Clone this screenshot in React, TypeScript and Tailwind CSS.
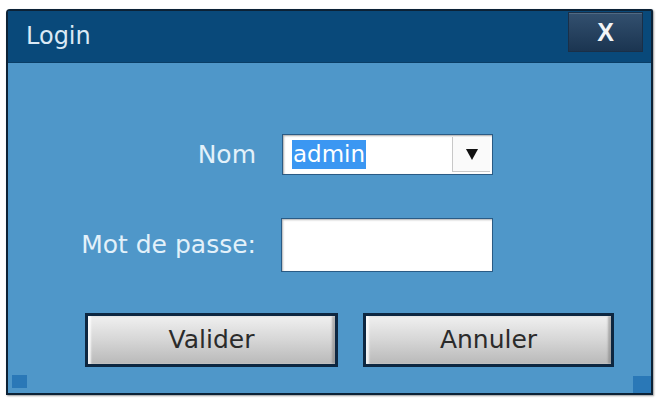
import React from "react";

export default function App() {
  const font = { fontFamily: '"DejaVu Sans", Verdana, sans-serif' };
  return (
    <div className="w-[660px] h-[398px] bg-white overflow-hidden" style={font}>
      <div className="relative ml-[6px] mt-[9px] w-[647px] h-[386px] flex flex-col border-2 border-[#0c2236] rounded-tl-[4px] rounded-tr-[2px] bg-[#4f97c9] shadow-[1px_1px_2px_rgba(0,0,0,0.4)]">
        {/* Title bar */}
        <div className="h-[52px] bg-[#09497a] flex items-start justify-between pl-[18px] pr-[8px] border-b border-[#0a3e66]">
          <div className="pt-[11px] text-[24px] leading-[28px] text-[#dbe9f5]">Login</div>
          <div className="mt-[1px] w-[75px] h-[40px] bg-gradient-to-b from-[#33506f] to-[#1b3551] border border-[#1a2f47] flex items-center justify-center shadow-[inset_0_1px_0_rgba(255,255,255,0.15)]">
            <span className="text-[25px] font-bold text-[#f2f4f6] leading-none" style={{ fontFamily: '"Liberation Sans", Arial, sans-serif' }}>X</span>
          </div>
        </div>

        {/* Body */}
        <div className="flex-1 flex flex-col pt-[71px]">
          <div className="flex items-center h-[41px]">
            <div className="w-[248px] text-right text-[25px] leading-[30px] text-[#e3f1fa]">Nom</div>
            <div className="ml-[26px] w-[211px] h-[41px] bg-white border border-[#2a5b85] shadow-[inset_1px_1px_2px_rgba(0,0,0,0.35)] flex items-stretch">
              <div className="flex-1 flex items-center pl-[9px]">
                <span className="bg-[#3b97f2] text-white text-[23px] leading-[29px] px-[1px]">admin</span>
              </div>
              <div className="w-[38px] flex items-center justify-center border-l border-[#c8c8c8] border-b bg-[#fafafa] mb-[2px] mr-[2px] mt-[2px]">
                <svg width="14" height="13" viewBox="0 0 15 14"><path d="M1 1 H14 L7.5 13 Z" fill="#111" /></svg>
              </div>
            </div>
          </div>

          <div className="flex items-center h-[54px] mt-[43px]">
            <div className="w-[248px] text-right text-[25px] leading-[30px] text-[#e3f1fa]">Mot de passe:</div>
            <div className="ml-[25px] w-[212px] h-[54px] bg-white border border-[#2a5b85] shadow-[inset_1px_1px_2px_rgba(0,0,0,0.3)]" />
          </div>

          <div className="flex mt-[41px] pl-[77px] gap-[25px]">
            <button className="w-[253px] h-[54px] border-[3px] border-[#0d2741] bg-gradient-to-b from-[#f0f0f0] via-[#d6d6d6] to-[#b9b9b9] shadow-[inset_3px_0_2px_rgba(255,255,255,0.8),inset_-3px_0_2px_rgba(120,120,120,0.5)] text-[25px] text-[#2b2b2b]">
              Valider
            </button>
            <button className="w-[251px] h-[54px] border-[3px] border-[#0d2741] bg-gradient-to-b from-[#f0f0f0] via-[#d6d6d6] to-[#b9b9b9] shadow-[inset_3px_0_2px_rgba(255,255,255,0.8),inset_-3px_0_2px_rgba(120,120,120,0.5)] text-[25px] text-[#2b2b2b]">
              Annuler
            </button>
          </div>
        </div>

        <div className="absolute left-[4px] bottom-[5px] w-[15px] h-[13px] bg-[#2a78b7]" />
        <div className="absolute right-0 bottom-0 w-[18px] h-[17px] bg-[#2a78b7]" />
      </div>
    </div>
  );
}
